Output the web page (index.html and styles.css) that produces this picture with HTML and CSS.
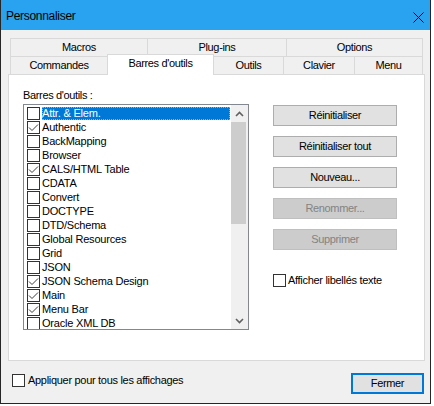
FILE: index.html
```html
<!DOCTYPE html>
<html lang="fr">
<head>
<meta charset="utf-8">
<title>Personnaliser</title>
<link rel="stylesheet" href="styles.css">
</head>
<body>
<div class="window">
  <div class="titlebar">
    <span class="title">Personnaliser</span>
    <svg class="close" width="11" height="11" viewBox="0 0 11 11"><path d="M0.5 0.5 L10.5 10.5 M10.5 0.5 L0.5 10.5" stroke="#000" stroke-width="1" fill="none"/></svg>
  </div>
  <div class="content">
    <div class="tabs">
      <div class="tabrow">
        <div class="tab t137">Macros</div>
        <div class="tab t139">Plug-ins</div>
        <div class="tab t137 last">Options</div>
      </div>
      <div class="tabrow">
        <div class="tab t97">Commandes</div>
        <div class="tab t107 active">Barres d'outils</div>
        <div class="tab t69">Outils</div>
        <div class="tab t71">Clavier</div>
        <div class="tab t69 last">Menu</div>
      </div>
    </div>
    <div class="panel">
      <div class="leftcol">
        <div class="label">Barres d'outils :</div>
        <div class="listbox">
          <div class="items">
            <div class="row"><span class="cb"></span><span class="item selected">Attr. &amp; Elem.</span></div>
            <div class="row"><span class="cb"><svg width="11" height="11" viewBox="0 0 11 11"><path d="M1 5.5 L4 8.5 L10 2.5" stroke="#3c3c3c" stroke-width="1" fill="none"/></svg></span><span class="item">Authentic</span></div>
            <div class="row"><span class="cb"></span><span class="item">BackMapping</span></div>
            <div class="row"><span class="cb"></span><span class="item">Browser</span></div>
            <div class="row"><span class="cb"><svg width="11" height="11" viewBox="0 0 11 11"><path d="M1 5.5 L4 8.5 L10 2.5" stroke="#3c3c3c" stroke-width="1" fill="none"/></svg></span><span class="item">CALS/HTML Table</span></div>
            <div class="row"><span class="cb"></span><span class="item">CDATA</span></div>
            <div class="row"><span class="cb"></span><span class="item">Convert</span></div>
            <div class="row"><span class="cb"></span><span class="item">DOCTYPE</span></div>
            <div class="row"><span class="cb"></span><span class="item">DTD/Schema</span></div>
            <div class="row"><span class="cb"></span><span class="item">Global Resources</span></div>
            <div class="row"><span class="cb"></span><span class="item">Grid</span></div>
            <div class="row"><span class="cb"></span><span class="item">JSON</span></div>
            <div class="row"><span class="cb"><svg width="11" height="11" viewBox="0 0 11 11"><path d="M1 5.5 L4 8.5 L10 2.5" stroke="#3c3c3c" stroke-width="1" fill="none"/></svg></span><span class="item">JSON Schema Design</span></div>
            <div class="row"><span class="cb"><svg width="11" height="11" viewBox="0 0 11 11"><path d="M1 5.5 L4 8.5 L10 2.5" stroke="#3c3c3c" stroke-width="1" fill="none"/></svg></span><span class="item">Main</span></div>
            <div class="row"><span class="cb"><svg width="11" height="11" viewBox="0 0 11 11"><path d="M1 5.5 L4 8.5 L10 2.5" stroke="#3c3c3c" stroke-width="1" fill="none"/></svg></span><span class="item">Menu Bar</span></div>
            <div class="row"><span class="cb"></span><span class="item">Oracle XML DB</span></div>
          </div>
          <div class="scrollbar">
            <div class="arrow"><svg width="9" height="6" viewBox="0 0 9 6"><path d="M1 5 L4.5 1.5 L8 5" stroke="#606060" stroke-width="1.6" fill="none"/></svg></div>
            <div class="thumb"></div>
            <div class="track"></div>
            <div class="arrow"><svg width="9" height="6" viewBox="0 0 9 6"><path d="M1 1 L4.5 4.5 L8 1" stroke="#606060" stroke-width="1.6" fill="none"/></svg></div>
          </div>
        </div>
      </div>
      <div class="rightcol">
        <div class="btn">Réinitialiser</div>
        <div class="btn">Réinitialiser tout</div>
        <div class="btn">Nouveau...</div>
        <div class="btn disabled">Renommer...</div>
        <div class="btn disabled">Supprimer</div>
        <div class="check first">
          <span class="cb"></span><span class="ctext">Afficher libellés texte</span>
        </div>
      </div>
    </div>
    <div class="footer">
      <div class="check apply">
        <span class="cb"></span><span class="ctext">Appliquer pour tous les affichages</span>
      </div>
      <div class="btn default">Fermer</div>
    </div>
  </div>
</div>
</body>
</html>
```

FILE: styles.css
```css
html, body {
  margin: 0;
  padding: 0;
  background: #ffffff;
}

body {
  font-family: "Liberation Sans", Arial, sans-serif;
  font-size: 11px;
  color: #000;
}

.window {
  width: 431px;
  height: 404px;
  box-sizing: border-box;
  border: 1px solid #262626;
  border-top: none;
  background: #f0f0f0;
  display: flex;
  flex-direction: column;
}

.titlebar {
  height: 30px;
  background: #29a3f0;
  display: flex;
  align-items: center;
  padding-left: 5px;
  flex-shrink: 0;
}

.title {
  font-size: 12px;
  letter-spacing: -0.3px;
  flex: 1;
  margin-top: 1px;
}

.close {
  margin-right: 6px;
  margin-top: 4px;
}

.content {
  padding: 8px 5px 0 7px;
  display: flex;
  flex-direction: column;
}

.tabs {
  margin: 0 2px;
  display: flex;
  flex-direction: column;
}

.tabrow {
  display: flex;
  height: 18px;
}

.tab {
  box-sizing: border-box;
  height: 18px;
  border-top: 1px solid #d9d9d9;
  border-left: 1px solid #d9d9d9;
  background: #f0f0f0;
  text-align: center;
  line-height: 17px;
  letter-spacing: -0.35px;
  flex-shrink: 0;
}

.tab.last {
  border-right: 1px solid #d9d9d9;
}

.t137 { width: 137px; }
.t139 { width: 139px; }
.t97 { width: 97px; }
.t107 { width: 107px; }
.t69 { width: 69px; }
.t71 { width: 71px; }

.tab.active {
  background: #ffffff;
  height: 21px;
  margin-top: -2px;
  border-right: 1px solid #d9d9d9;
  line-height: 16px;
  position: relative;
  z-index: 1;
}

.tab.active + .tab {
  border-left: none;
}

.panel {
  height: 287px;
  box-sizing: border-box;
  border: 1px solid #d9d9d9;
  background: #ffffff;
  display: flex;
  padding: 14px 0 0 14px;
}

.leftcol {
  display: flex;
  flex-direction: column;
}

.label {
  line-height: 13px;
  letter-spacing: -0.35px;
  margin-bottom: 2px;
}

.listbox {
  width: 226px;
  height: 226px;
  box-sizing: border-box;
  border: 1px solid #828790;
  display: flex;
  background: #ffffff;
}

.items {
  flex: 1;
  padding-top: 2px;
  overflow: hidden;
}

.row {
  height: 14px;
  display: flex;
  align-items: flex-start;
}

.cb {
  width: 13px;
  height: 13px;
  box-sizing: border-box;
  border: 1px solid #333333;
  background: #ffffff;
  flex-shrink: 0;
  display: flex;
}

.row .cb {
  margin-left: 3px;
}

.item {
  margin-left: 2px;
  height: 13px;
  line-height: 13px;
  letter-spacing: -0.2px;
  white-space: nowrap;
}

.item.selected {
  flex: 1;
  margin-right: 1px;
  margin-left: 2px;
  background: #0078d7;
  color: #ffffff;
  box-sizing: border-box;
  outline: 1px dotted #f39a3a;
  outline-offset: -1px;
}

.scrollbar {
  width: 17px;
  background: #f0f0f0;
  display: flex;
  flex-direction: column;
  flex-shrink: 0;
}

.arrow {
  height: 17px;
  display: flex;
  align-items: center;
  justify-content: center;
  flex-shrink: 0;
}

.thumb {
  height: 102px;
  margin: 0 2px 0 0;
  background: #cdcdcd;
}

.track {
  flex: 1;
}

.rightcol {
  margin-left: 24px;
  margin-top: 16px;
  display: flex;
  flex-direction: column;
  gap: 10px;
}

.btn {
  width: 124px;
  height: 21px;
  box-sizing: border-box;
  border: 1px solid #adadad;
  background: #e1e1e1;
  text-align: center;
  line-height: 19px;
  letter-spacing: -0.35px;
}

.btn.disabled {
  background: #cccccc;
  border-color: #bfbfbf;
  color: #838383;
}

.check {
  display: flex;
  align-items: center;
}

.check.first {
  margin-top: 14px;
}

.ctext {
  margin-left: 2px;
  letter-spacing: -0.3px;
  line-height: 13px;
  white-space: nowrap;
}

.footer {
  display: flex;
  align-items: flex-start;
  padding-top: 12px;
}

.check.apply {
  margin-left: 4px;
  margin-top: 1px;
}

.apply .ctext {
  margin-left: 3px;
}

.btn.default {
  width: 73px;
  margin-left: auto;
  margin-right: 1px;
  border: 2px solid #0078d7;
  line-height: 17px;
}
```
